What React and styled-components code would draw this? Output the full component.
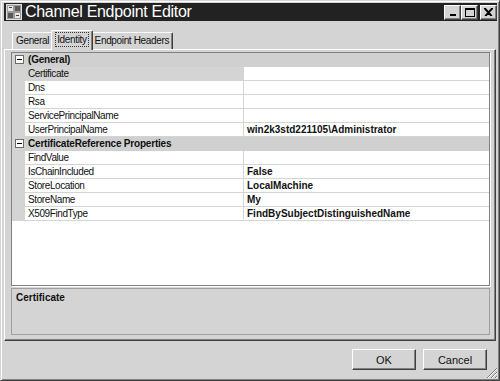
import styled, { createGlobalStyle } from "styled-components";

const GlobalStyle = createGlobalStyle`
	html, body {
		margin: 0;
		padding: 0;
		background: #d4d4d4;
	}
	* {
		box-sizing: border-box;
	}
`;

const general = [
	{ name: "Certificate", value: "", selected: true },
	{ name: "Dns", value: "" },
	{ name: "Rsa", value: "" },
	{ name: "ServicePrincipalName", value: "" },
	{ name: "UserPrincipalName", value: "win2k3std221105\\Administrator" },
];

const certRef = [
	{ name: "FindValue", value: "" },
	{ name: "IsChainIncluded", value: "False" },
	{ name: "StoreLocation", value: "LocalMachine" },
	{ name: "StoreName", value: "My" },
	{ name: "X509FindType", value: "FindBySubjectDistinguishedName" },
];

function AppIcon() {
	return (
		<svg width="16" height="16" viewBox="0 0 16 16">
			<rect x="0.5" y="0.5" width="15" height="15" fill="#9a9a9a" stroke="#e0e0e0" />
			<rect x="2" y="2" width="5" height="5" fill="#e8e8e8" />
			<rect x="9" y="2" width="5" height="5" fill="#5a5a5a" />
			<rect x="2" y="9" width="5" height="5" fill="#5a5a5a" />
			<rect x="9" y="9" width="5" height="5" fill="#e8e8e8" />
			<rect x="3" y="3" width="3" height="1" fill="#404040" />
			<rect x="10" y="11" width="3" height="1" fill="#404040" />
		</svg>
	);
}

function Category({ label, rows }) {
	return (
		<>
			<CategoryRow>
				<Margin>
					<Toggle>
						<svg width="9" height="9" viewBox="0 0 9 9">
							<rect x="0.5" y="0.5" width="8" height="8" fill="#ffffff" stroke="#6a6a6a" />
							<rect x="2" y="4" width="5" height="1" fill="#000" />
						</svg>
					</Toggle>
				</Margin>
				<CategoryLabel>{label}</CategoryLabel>
			</CategoryRow>
			{rows.map((r) => (
				<PropRow key={r.name}>
					<Margin />
					<NameCell $selected={r.selected}>{r.name}</NameCell>
					<ValueCell>{r.value}</ValueCell>
				</PropRow>
			))}
		</>
	);
}

export default function App() {
	return (
		<>
			<GlobalStyle />
			<Window>
				<TitleBar>
					<AppIcon />
					<Title>Channel Endpoint Editor</Title>
					<WinButtons>
						<WinButton>
							<svg width="8" height="8" viewBox="0 0 8 8">
								<rect x="1" y="6" width="6" height="2" fill="#000" />
							</svg>
						</WinButton>
						<WinButton>
							<svg width="10" height="9" viewBox="0 0 10 9">
								<rect x="0.5" y="0.5" width="9" height="8" fill="none" stroke="#000" />
								<rect x="0" y="0" width="10" height="2" fill="#000" />
							</svg>
						</WinButton>
						<WinButton $close>
							<svg width="9" height="8" viewBox="0 0 9 8">
								<path d="M1 0 L8 8 M8 0 L1 8 M0 0 L7 8 M9 0 L2 8" stroke="#000" strokeWidth="1.2" />
							</svg>
						</WinButton>
					</WinButtons>
				</TitleBar>

				<Body>
					<TabStrip>
						<Tab>General</Tab>
						<Tab $active>
							<Focus>Identity</Focus>
						</Tab>
						<Tab>Endpoint Headers</Tab>
					</TabStrip>

					<TabPanel>
						<Grid>
							<Category label="(General)" rows={general} />
							<Category label="CertificateReference Properties" rows={certRef} />
						</Grid>
						<Description>
							<DescTitle>Certificate</DescTitle>
						</Description>
					</TabPanel>

					<ButtonRow>
						<PushButton>OK</PushButton>
						<PushButton>Cancel</PushButton>
					</ButtonRow>
				</Body>

				<Grip>
					<svg width="12" height="12" viewBox="0 0 12 12">
						<path d="M11 1 L1 11 M11 5 L5 11 M11 9 L9 11" stroke="#808080" strokeWidth="1" />
						<path d="M11 2 L2 11 M11 6 L6 11 M11 10 L10 11" stroke="#ffffff" strokeWidth="1" />
					</svg>
				</Grip>
			</Window>
		</>
	);
}

const Window = styled.div`
	position: relative;
	width: 500px;
	height: 381px;
	background: #d4d4d4;
	border-top: 1px solid #d4d4d4;
	border-left: 1px solid #d4d4d4;
	border-right: 1px solid #404040;
	border-bottom: 1px solid #404040;
	box-shadow: inset 1px 1px 0 #ffffff, inset -1px -1px 0 #808080;
	padding: 2px 2px 0 3px;
	display: flex;
	flex-direction: column;
	font-family: "Liberation Sans", Arial, sans-serif;
`;

const TitleBar = styled.div`
	height: 18px;
	background: #222222;
	display: flex;
	align-items: center;
	padding: 0 0 0 2px;
	gap: 3px;
`;

const Title = styled.span`
	color: #ffffff;
	font-size: 16px;
	letter-spacing: -0.3px;
	line-height: 18px;
`;

const WinButtons = styled.div`
	margin-left: auto;
	display: flex;
	align-items: center;
`;

const WinButton = styled.div`
	width: 17px;
	height: 15px;
	margin-left: ${(p) => (p.$close ? "2px" : "0")};
	background: #d4d4d4;
	border-top: 1px solid #ffffff;
	border-left: 1px solid #ffffff;
	border-right: 1px solid #404040;
	border-bottom: 1px solid #404040;
	box-shadow: inset -1px -1px 0 #808080;
	display: flex;
	align-items: center;
	justify-content: center;
`;

const Body = styled.div`
	flex: 1;
	display: flex;
	flex-direction: column;
	padding: 9px 1px 0 0;
`;

const TabStrip = styled.div`
	display: flex;
	align-items: flex-end;
	height: 19px;
	padding-left: 8px;
	position: relative;
	z-index: 1;
`;

const Tab = styled.div`
	height: ${(p) => (p.$active ? "20px" : "17px")};
	margin: ${(p) => (p.$active ? "0 -2px -1px -2px" : "0")};
	padding: ${(p) => (p.$active ? "2px 4px 0 4px" : "1px 3px 0 3px")};
	background: #d4d4d4;
	border-top: 1px solid #ffffff;
	border-left: 1px solid #ffffff;
	border-right: 1px solid #404040;
	box-shadow: inset -1px 0 0 #808080;
	border-radius: 2px 2px 0 0;
	font-size: 10px;
	letter-spacing: -0.35px;
	color: #111;
	line-height: 13px;
	z-index: ${(p) => (p.$active ? 2 : 0)};
`;

const Focus = styled.span`
	display: inline-block;
	outline: 1px dotted #333;
	padding: 0 1px;
`;

const TabPanel = styled.div`
	height: 292px;
	background: #d4d4d4;
	border-top: 1px solid #ffffff;
	border-left: 1px solid #ffffff;
	border-right: 1px solid #404040;
	border-bottom: 1px solid #404040;
	box-shadow: inset -1px -1px 0 #808080;
	padding: 2px 5px 4px 6px;
	display: flex;
	flex-direction: column;
	gap: 2px;
`;

const Grid = styled.div`
	height: 234px;
	background: #ffffff;
	border: 1px solid #808080;
	box-shadow: 1px 1px 0 #ffffff;
	display: flex;
	flex-direction: column;
	font-size: 10px;
	color: #111;
`;

const RowBase = styled.div`
	height: 14px;
	display: grid;
	grid-template-columns: 13px 219px 1fr;
	border-bottom: 1px solid #d4d4d4;
	line-height: 13px;
`;

const CategoryRow = styled(RowBase)`
	background: #d0d0d0;
	border-bottom-color: #d0d0d0;
`;

const PropRow = styled(RowBase)``;

const Margin = styled.div`
	background: #d4d4d4;
	display: flex;
	align-items: center;
	justify-content: center;
`;

const Toggle = styled.span`
	display: flex;
	margin-left: 2px;
`;

const CategoryLabel = styled.div`
	grid-column: 2 / 4;
	font-weight: bold;
	padding-left: 3px;
	letter-spacing: -0.2px;
`;

const NameCell = styled.div`
	padding-left: 3px;
	letter-spacing: -0.4px;
	border-right: 1px solid #d4d4d4;
	background: ${(p) => (p.$selected ? "#d4d4d4" : "#ffffff")};
	white-space: nowrap;
	overflow: hidden;
`;

const ValueCell = styled.div`
	padding-left: 3px;
	font-weight: bold;
	white-space: nowrap;
`;

const Description = styled.div`
	flex: 1;
	border-top: 1px solid #808080;
	border-left: 1px solid #808080;
	border-right: 1px solid #ffffff;
	border-bottom: 1px solid #ffffff;
	padding: 3px 4px;
	margin-bottom: 1px;
	outline: 1px solid #a0a0a0;
	outline-offset: -1px;
`;

const DescTitle = styled.div`
	font-size: 10px;
	font-weight: bold;
	color: #111;
`;

const ButtonRow = styled.div`
	display: flex;
	justify-content: flex-end;
	gap: 7px;
	padding: 8px 9px 0 0;
`;

const PushButton = styled.button`
	width: 64px;
	height: 21px;
	padding: 0;
	background: #d4d4d4;
	border-top: 1px solid #ffffff;
	border-left: 1px solid #ffffff;
	border-right: 1px solid #404040;
	border-bottom: 1px solid #404040;
	box-shadow: inset -1px -1px 0 #808080;
	border-radius: 0;
	font-family: "Liberation Sans", Arial, sans-serif;
	font-size: 11px;
	color: #111;
`;

const Grip = styled.div`
	position: absolute;
	right: 1px;
	bottom: 1px;
	width: 12px;
	height: 12px;
	display: flex;
`;
